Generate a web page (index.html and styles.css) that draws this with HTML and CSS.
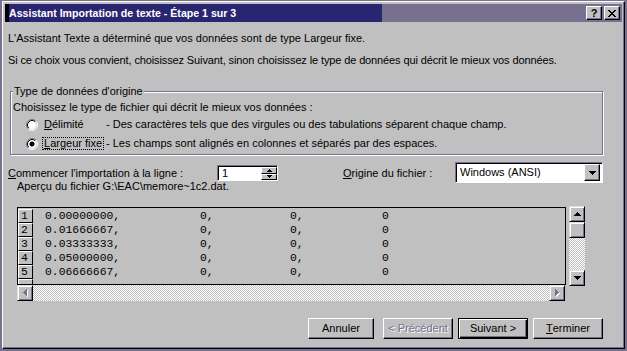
FILE: index.html
```html
<!DOCTYPE html>
<html lang="fr">
<head>
    <meta charset="UTF-8">
    <title>Assistant Importation de texte</title>
    <link rel="stylesheet" href="styles.css">
</head>
<body>
    <div class="window">
        <div class="titlebar">
            <span class="title">Assistant Importation de texte - Étape 1 sur 3</span>
            <div class="caption-buttons">
                <span class="cbtn help">?</span>
                <span class="cbtn close">
                    <svg width="8" height="7" viewBox="0 0 8 7" shape-rendering="crispEdges"><path d="M0 0h2v1H0zM6 0h2v1H6zM1 1h2v1H1zM5 1h2v1H5zM2 2h4v1H2zM3 3h2v1H3zM2 4h4v1H2zM1 5h2v1H1zM5 5h2v1H5zM0 6h2v1H0zM6 6h2v1H6z"/></svg>
                </span>
            </div>
        </div>

        <div class="content">
            <p class="line first">L'Assistant Texte a déterminé que vos données sont de type Largeur fixe.</p>
            <p class="line second">Si ce choix vous convient, choisissez Suivant, sinon choisissez le type de données qui décrit le mieux vos données.</p>

            <div class="group">
                <span class="group-title">Type de données d'origine</span>
                <p class="line">Choisissez le type de fichier qui décrit le mieux vos données :</p>
                <div class="option">
                    <span class="choice">
                        <svg class="radio" width="12" height="12" viewBox="0 0 12 12">
                            <circle cx="6" cy="6" r="4.5" fill="#fff"/>
                            <path d="M2.11 9.89A5.5 5.5 0 0 1 9.89 2.11" fill="none" stroke="#77718f"/>
                            <path d="M9.89 2.11A5.5 5.5 0 0 1 2.11 9.89" fill="none" stroke="#fff"/>
                            <path d="M2.82 9.18A4.5 4.5 0 0 1 9.18 2.82" fill="none" stroke="#000"/>
                            <path d="M9.18 2.82A4.5 4.5 0 0 1 2.82 9.18" fill="none" stroke="#dfdfdf"/>
                        </svg>
                        <span class="opt-label"><u>D</u>élimité</span>
                    </span>
                    <span class="desc">- Des caractères tels que des virgules ou des tabulations séparent chaque champ.</span>
                </div>
                <div class="option">
                    <span class="choice">
                        <svg class="radio" width="12" height="12" viewBox="0 0 12 12">
                            <circle cx="6" cy="6" r="4.5" fill="#fff"/>
                            <path d="M2.11 9.89A5.5 5.5 0 0 1 9.89 2.11" fill="none" stroke="#77718f"/>
                            <path d="M9.89 2.11A5.5 5.5 0 0 1 2.11 9.89" fill="none" stroke="#fff"/>
                            <path d="M2.82 9.18A4.5 4.5 0 0 1 9.18 2.82" fill="none" stroke="#000"/>
                            <path d="M9.18 2.82A4.5 4.5 0 0 1 2.82 9.18" fill="none" stroke="#dfdfdf"/>
                            <rect x="4" y="4" width="4" height="4" fill="#000"/>
                            <rect x="5" y="3.5" width="2" height="5" fill="#000"/>
                            <rect x="3.5" y="5" width="5" height="2" fill="#000"/>
                        </svg>
                        <span class="opt-label focused"><u>L</u>argeur fixe</span>
                    </span>
                    <span class="desc">- Les champs sont alignés en colonnes et séparés par des espaces.</span>
                </div>
            </div>

            <div class="start-row">
                <span class="start-label"><u>C</u>ommencer l'importation à la ligne :</span>
                <div class="spin">
                    <span class="spin-value">1</span>
                    <div class="spin-buttons">
                        <span class="spin-btn"><svg width="5" height="3" viewBox="0 0 5 3" shape-rendering="crispEdges"><path d="M2 0h1v1h1v1h1v1H0V2h1V1h1z"/></svg></span>
                        <span class="spin-btn"><svg width="5" height="3" viewBox="0 0 5 3" shape-rendering="crispEdges"><path d="M0 0h5v1H4v1H3v1H2V2H1V1H0z"/></svg></span>
                    </div>
                </div>
                <span class="origin-label"><u>O</u>rigine du fichier :</span>
                <div class="combo">
                    <span class="combo-value">Windows (ANSI)</span>
                    <span class="combo-btn"><svg width="7" height="4" viewBox="0 0 7 4" shape-rendering="crispEdges"><path d="M0 0h7v1H6v1H5v1H4v1H3V3H2V2H1V1H0z"/></svg></span>
                </div>
            </div>

            <p class="line preview-caption">Aperçu du fichier G:\EAC\memore~1c2.dat.</p>

            <div class="preview">
                <div class="preview-main">
                    <div class="grid">
                        <div class="row"><span class="num">1</span><span class="c1">0.00000000,</span><span class="c2">0,</span><span class="c3">0,</span><span class="c4">0</span></div>
                        <div class="row"><span class="num">2</span><span class="c1">0.01666667,</span><span class="c2">0,</span><span class="c3">0,</span><span class="c4">0</span></div>
                        <div class="row"><span class="num">3</span><span class="c1">0.03333333,</span><span class="c2">0,</span><span class="c3">0,</span><span class="c4">0</span></div>
                        <div class="row"><span class="num">4</span><span class="c1">0.05000000,</span><span class="c2">0,</span><span class="c3">0,</span><span class="c4">0</span></div>
                        <div class="row"><span class="num">5</span><span class="c1">0.06666667,</span><span class="c2">0,</span><span class="c3">0,</span><span class="c4">0</span></div>
                        <div class="row"><span class="num"></span></div>
                    </div>
                    <div class="hscroll">
                        <span class="sbtn"><svg width="5" height="8" viewBox="0 0 5 8" shape-rendering="crispEdges"><path d="M4 1h1v7H4V7H3V6H2V5H1V4h1V3h1V2h1z" fill="#fff"/><path d="M3 0h1v7H3V6H2V5H1V4H0V3h1V2h1V1h1z" fill="#77718f"/></svg></span>
                        <span class="track"></span>
                        <span class="sbtn"><svg width="5" height="8" viewBox="0 0 5 8" shape-rendering="crispEdges"><path d="M1 1h1v1h1v1h1v1h1v1H4v1H3v1H2v1H1z" fill="#fff"/><path d="M0 0h1v1h1v1h1v1h1v1H3v1H2v1H1v1H0z" fill="#77718f"/></svg></span>
                    </div>
                </div>
                <div class="vscroll">
                    <span class="sbtn"><svg width="7" height="4" viewBox="0 0 7 4" shape-rendering="crispEdges"><path d="M3 0h1v1h1v1h1v1h1v1H0V3h1V2h1V1h1z"/></svg></span>
                    <span class="sbtn thumb"></span>
                    <span class="track"></span>
                    <span class="sbtn"><svg width="7" height="4" viewBox="0 0 7 4" shape-rendering="crispEdges"><path d="M0 0h7v1H6v1H5v1H4v1H3V3H2V2H1V1H0z"/></svg></span>
                </div>
            </div>

            <div class="buttons">
                <span class="btn cancel">Annuler</span>
                <span class="btn disabled back">&lt; Précédent</span>
                <span class="btn default">Suivant &gt;</span>
                <span class="btn"><u>T</u>erminer</span>
            </div>
        </div>
    </div>
</body>
</html>
```

FILE: styles.css
```css
body {
    margin: 0;
    background: #77718f;
    font-family: "Liberation Sans", Arial, sans-serif;
    font-size: 11px;
    line-height: 13px;
    color: #000;
}

u {
    text-decoration: underline;
    text-underline-offset: 1px;
}

.window {
    box-sizing: border-box;
    width: 623px;
    height: 348px;
    margin: 1px 0 0 2px;
    padding: 2px;
    background: #c0c0c0;
    border: 1px solid;
    border-color: #fff #000 #000 #fff;
    box-shadow: inset -1px -1px #77718f;
}

/* title bar */
.titlebar {
    height: 18px;
    display: flex;
    align-items: center;
    justify-content: space-between;
    background: linear-gradient(to right, #2a2570 0, #2a2570 377px, #77718f 377px);
    box-shadow: inset 4px 0 #000;
}

.title {
    padding-left: 4px;
    color: #fff;
    font-weight: bold;
    font-size: 10.6px;
    white-space: nowrap;
}

.caption-buttons {
    display: flex;
    gap: 2px;
    margin-right: 2px;
}

.cbtn {
    box-sizing: border-box;
    width: 16px;
    height: 14px;
    display: flex;
    align-items: center;
    justify-content: center;
    background: #c0c0c0;
    border: 1px solid;
    border-color: #fff #000 #000 #fff;
    box-shadow: inset -1px -1px #77718f;
}

.help {
    font-weight: bold;
    font-size: 11px;
    line-height: 11px;
}

/* texts */
.content {
    padding: 0 19px 0 3px;
}

.line {
    margin: 0;
    white-space: nowrap;
}

.line.first {
    margin-top: 10px;
}

.line.second {
    margin-top: 9px;
    letter-spacing: -0.12px;
}

/* group box */
.group {
    position: relative;
    box-sizing: border-box;
    width: 593px;
    margin: 24px 0 0 2px;
    padding: 9px 0 1px 2px;
    border: 1px solid #77718f;
    box-shadow: inset 1px 1px #fff, 1px 1px #fff;
}

.group-title {
    position: absolute;
    top: -7px;
    left: 2px;
    padding: 0 1px;
    background: #c0c0c0;
}

.option {
    display: flex;
    align-items: center;
    height: 19px;
    padding-left: 13px;
    white-space: nowrap;
}

.option:first-of-type {
    margin-top: 1px;
}

.choice {
    display: flex;
    align-items: center;
    flex-shrink: 0;
    width: 80px;
}

.radio {
    flex-shrink: 0;
    margin-right: 4px;
}

.opt-label {
    padding: 0 1px;
    line-height: 11px;
    white-space: nowrap;
    border: 1px dotted transparent;
}

.opt-label.focused {
    border-color: #000;
}

/* start line & origin */
.start-row {
    display: flex;
    align-items: center;
    height: 16px;
    margin-top: 10px;
    white-space: nowrap;
}

.start-label {
    width: 209px;
}

.spin {
    box-sizing: border-box;
    width: 61px;
    height: 16px;
    display: flex;
    justify-content: space-between;
    background: #fff;
    border: 1px solid;
    border-color: #77718f #fff #fff #77718f;
    box-shadow: inset 1px 1px #000;
    padding: 1px 0 0 1px;
}

.spin-value {
    padding-left: 3px;
    line-height: 13px;
}

.spin-buttons {
    width: 16px;
    display: flex;
    flex-direction: column;
}

.spin-btn {
    box-sizing: border-box;
    height: 7px;
    display: flex;
    align-items: center;
    justify-content: center;
    background: #c0c0c0;
    border: 1px solid;
    border-color: #fff #000 #000 #fff;
}

.origin-label {
    width: 112px;
    margin-left: 65px;
}

.combo {
    box-sizing: border-box;
    width: 148px;
    height: 21px;
    margin-top: -3px;
    margin-bottom: -2px;
    display: flex;
    align-items: center;
    justify-content: space-between;
    padding: 2px;
    background: #fff;
    border: 1px solid;
    border-color: #77718f #fff #fff #77718f;
    box-shadow: inset 1px 1px #000;
}

.combo-value {
    padding-left: 2px;
}

.combo-btn {
    box-sizing: border-box;
    width: 16px;
    height: 17px;
    display: flex;
    align-items: center;
    justify-content: center;
    background: #c0c0c0;
    border: 1px solid;
    border-color: #fff #000 #000 #fff;
    box-shadow: inset -1px -1px #77718f;
}

.preview-caption {
    margin-top: -1px;
    padding-left: 9px;
}

/* preview grid */
.preview {
    display: flex;
    margin: 14px 0 0 9px;
}

.preview-main {
    width: 549px;
}

.grid {
    box-sizing: border-box;
    height: 78px;
    padding-top: 1px;
    border: 1px solid #000;
    overflow: hidden;
    font-family: "Liberation Mono", "Courier New", monospace;
    font-size: 11.4px;
    white-space: nowrap;
}

.row {
    display: flex;
    height: 14px;
    line-height: 13px;
}

.num {
    box-sizing: border-box;
    flex-shrink: 0;
    width: 15px;
    padding-left: 2px;
    border: 1px solid;
    border-color: #fff #000 #000 #fff;
}

.c1,
.c2,
.c3,
.c4 {
    box-sizing: border-box;
    flex-shrink: 0;
    padding-top: 1px;
}

.c1 {
    width: 167px;
    padding-left: 12px;
}

.c2 {
    width: 90px;
}

.c3 {
    width: 92px;
}

/* scroll bars */
.track {
    flex: 1;
    background-image: conic-gradient(#fff 25%, #c0c0c0 0 50%, #fff 0 75%, #c0c0c0 0);
    background-size: 2px 2px;
}

.sbtn {
    box-sizing: border-box;
    width: 16px;
    height: 16px;
    display: flex;
    align-items: center;
    justify-content: center;
    background: #c0c0c0;
    border: 1px solid;
    border-color: #dfdfdf #000 #000 #dfdfdf;
    box-shadow: inset 1px 1px #fff, inset -1px -1px #77718f;
}

.hscroll {
    display: flex;
    width: 548px;
    height: 16px;
}

.vscroll {
    display: flex;
    flex-direction: column;
    width: 16px;
    height: 80px;
    margin: -1px 0 0 3px;
}

/* dialog buttons */
.buttons {
    display: flex;
    justify-content: flex-end;
    margin-top: 17px;
}

.btn {
    box-sizing: border-box;
    width: 70px;
    height: 21px;
    margin-left: 5px;
    display: flex;
    align-items: center;
    justify-content: center;
    border: 1px solid;
    border-color: #fff #000 #000 #fff;
    box-shadow: inset -1px -1px #77718f;
}

.btn.cancel {
    width: 66px;
}

.btn.back {
    margin-left: 9px;
}

.btn.disabled {
    color: #77718f;
    text-shadow: 1px 1px 0 #fff;
}

.btn.default {
    border-color: #000;
    box-shadow: inset 1px 1px #fff, inset -1px -1px #000, inset -2px -2px #77718f;
}
```
